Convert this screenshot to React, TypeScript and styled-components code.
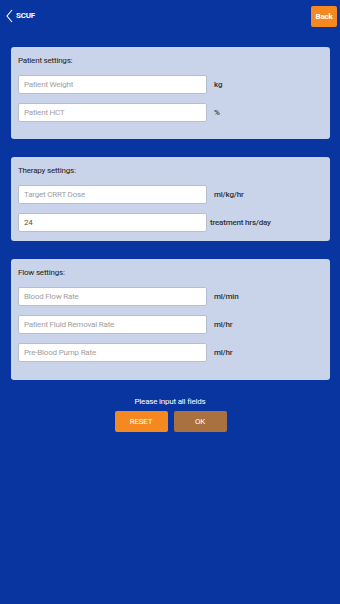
import React from "react";
import styled, { createGlobalStyle } from "styled-components";

const GlobalStyle = createGlobalStyle`
  html, body {
    margin: 0;
    padding: 0;
    background: #0835a0;
  }
  body {
    font-family: Roboto, "Liberation Sans", Arial, sans-serif;
  }
`;

const Page = styled.div`
  width: 340px;
  height: 604px;
  background: #0835a0;
  display: flex;
  flex-direction: column;
  box-sizing: border-box;
  letter-spacing: -0.2px;
`;

const Header = styled.div`
  height: 31px;
  display: flex;
  align-items: center;
  justify-content: space-between;
  padding: 0 3px 0 6px;
`;

const Title = styled.div`
  display: flex;
  align-items: center;
  gap: 3px;
  color: #fff;
  font-size: 8px;
  font-weight: bold;
`;

const BackButton = styled.button`
  width: 26px;
  height: 21px;
  background: #f5891f;
  color: #fff;
  border: none;
  border-radius: 2px;
  font-family: inherit;
  font-size: 8px;
  font-weight: bold;
  letter-spacing: -0.2px;
  padding: 0;
  margin-top: 1px;
`;

const Content = styled.div`
  display: flex;
  flex-direction: column;
  gap: 18px;
  padding: 16px 10px 0 11px;
`;

const Panel = styled.div<{ $bottom: number }>`
  background: #c9d3ea;
  border-radius: 3px;
  padding: 9px 7px ${(p) => p.$bottom}px 7px;
  display: flex;
  flex-direction: column;
  gap: 9px;
`;

const PanelTitle = styled.div`
  font-size: 8px;
  color: #222;
  height: 10px;
  line-height: 10px;
`;

const Row = styled.div`
  display: flex;
  align-items: center;
`;

const Field = styled.input`
  width: 189px;
  height: 19px;
  box-sizing: border-box;
  border: 1px solid #b8bfcc;
  border-radius: 2px;
  background: #fff;
  padding: 0 5px;
  font-family: inherit;
  font-size: 8px;
  letter-spacing: -0.2px;
  color: #555;
  outline: none;
  &::placeholder {
    color: #a0a0a0;
  }
`;

const Unit = styled.span<{ $gap: number }>`
  margin-left: ${(p) => p.$gap}px;
  font-size: 8px;
  font-weight: 500;
  color: #333;
`;

const Footer = styled.div`
  display: flex;
  flex-direction: column;
  align-items: center;
  margin-top: 17px;
  gap: 5px;
`;

const Hint = styled.div`
  color: #fff;
  font-size: 8px;
`;

const Buttons = styled.div`
  display: flex;
  gap: 6px;
  margin-left: 1px;
`;

const ActionButton = styled.button<{ $color: string }>`
  width: 53px;
  height: 21px;
  background: ${(p) => p.$color};
  color: #fff;
  border: none;
  border-radius: 2px;
  font-family: inherit;
  font-size: 8px;
  letter-spacing: -0.2px;
  padding: 0;
`;

type FieldDef = { placeholder: string; unit: string; value?: string; gap?: number };

const sections: { title: string; bottom: number; fields: FieldDef[] }[] = [
  {
    title: "Patient settings:",
    bottom: 17,
    fields: [
      { placeholder: "Patient Weight", unit: "kg" },
      { placeholder: "Patient HCT", unit: "%" },
    ],
  },
  {
    title: "Therapy settings:",
    bottom: 9,
    fields: [
      { placeholder: "Target CRRT Dose", unit: "ml/kg/hr" },
      { placeholder: "", unit: "treatment hrs/day", value: "24", gap: 3 },
    ],
  },
  {
    title: "Flow settings:",
    bottom: 18,
    fields: [
      { placeholder: "Blood Flow Rate", unit: "ml/min" },
      { placeholder: "Patient Fluid Removal Rate", unit: "ml/hr" },
      { placeholder: "Pre-Blood Pump Rate", unit: "ml/hr" },
    ],
  },
];

const Chevron = () => (
  <svg width="7" height="14" viewBox="0 0 7 14">
    <path d="M6 1 L1 7 L6 13" fill="none" stroke="#fff" strokeWidth="1.1" />
  </svg>
);

export default function App() {
  return (
    <Page>
      <GlobalStyle />
      <Header>
        <Title>
          <Chevron />
          SCUF
        </Title>
        <BackButton>Back</BackButton>
      </Header>
      <Content>
        {sections.map((s) => (
          <Panel key={s.title} $bottom={s.bottom}>
            <PanelTitle>{s.title}</PanelTitle>
            {s.fields.map((f) => (
              <Row key={f.unit + f.placeholder}>
                <Field placeholder={f.placeholder} defaultValue={f.value} />
                <Unit $gap={f.gap ?? 7}>{f.unit}</Unit>
              </Row>
            ))}
          </Panel>
        ))}
      </Content>
      <Footer>
        <Hint>Please input all fields</Hint>
        <Buttons>
          <ActionButton $color="#f5891f">RESET</ActionButton>
          <ActionButton $color="#a8713f">OK</ActionButton>
        </Buttons>
      </Footer>
    </Page>
  );
}
